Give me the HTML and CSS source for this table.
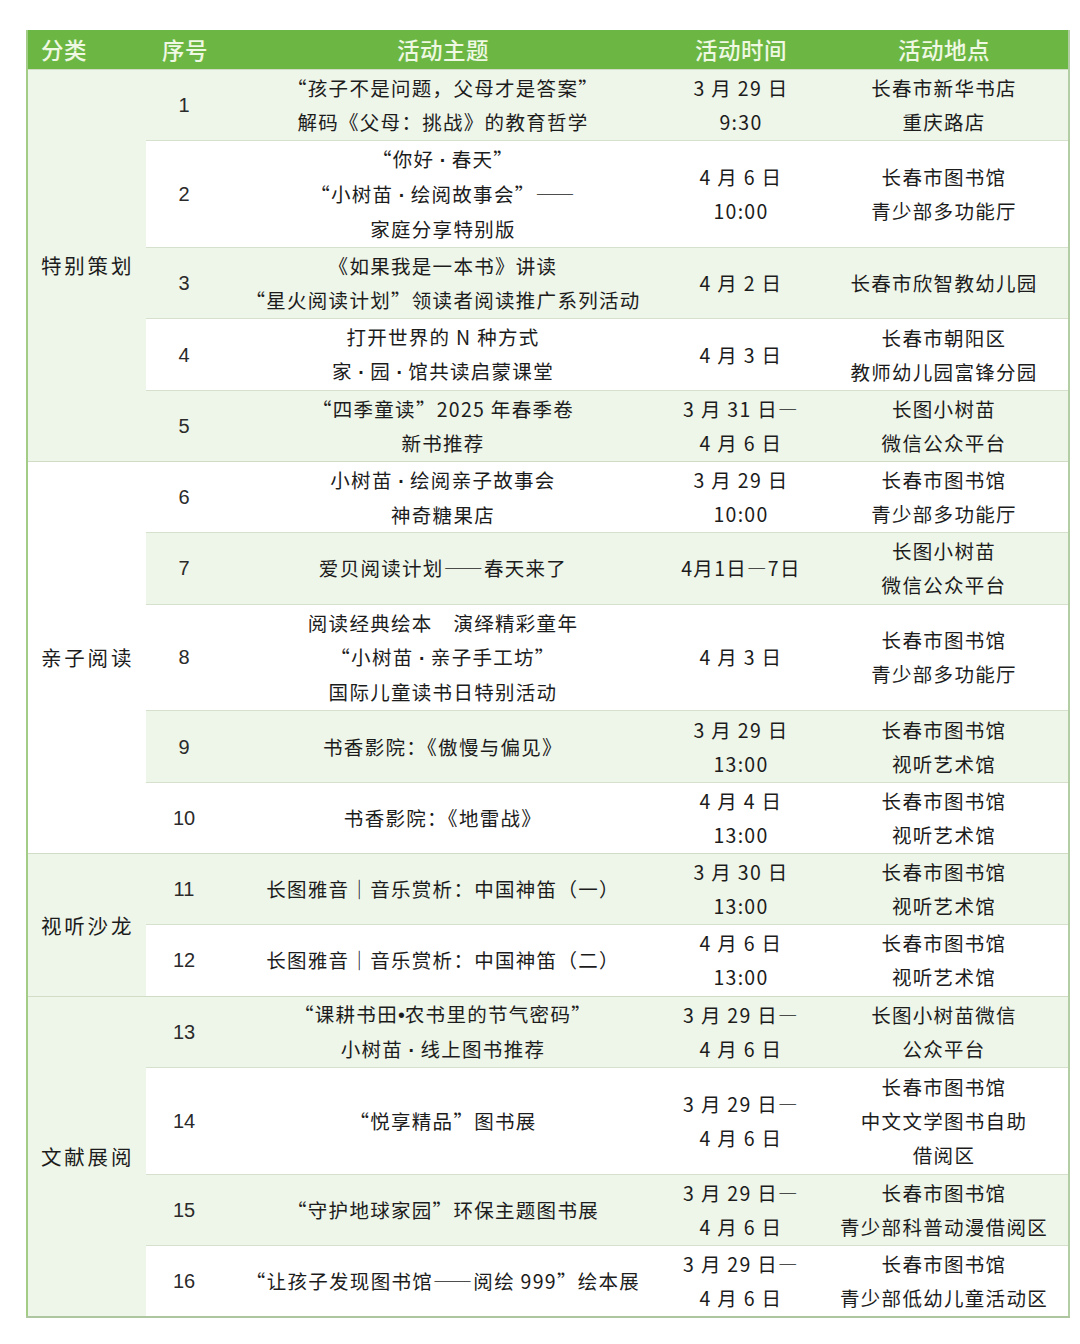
FILE: index.html
```html
<!DOCTYPE html>
<html lang="zh-CN">
<head>
<meta charset="utf-8">
<title>活动安排</title>
<link rel="stylesheet" href="styles.css">
</head>
<body>
<table class="schedule">
  <colgroup>
    <col class="c-cat"><col class="c-no"><col class="c-topic"><col class="c-time"><col class="c-place">
  </colgroup>
  <thead>
    <tr class="head">
      <th class="h-cat">分类</th><th>序号</th><th>活动主题</th><th>活动时间</th><th>活动地点</th>
    </tr>
  </thead>
  <tbody>
    <tr class="tint group-start l2">
      <td class="cat tint" rowspan="5">特别策划</td>
      <td class="no">1</td>
      <td>“孩子不是问题，父母才是答案”<br>解码《父母：挑战》的教育哲学</td>
      <td>3 月 29 日<br>9:30</td>
      <td>长春市新华书店<br>重庆路店</td>
    </tr>
    <tr class="l3">
      <td class="no">2</td>
      <td>“你好<span class="dot"> · </span>春天”<br>“小树苗<span class="dot"> · </span>绘阅故事会”——<br>家庭分享特别版</td>
      <td>4 月 6 日<br>10:00</td>
      <td>长春市图书馆<br>青少部多功能厅</td>
    </tr>
    <tr class="tint l2">
      <td class="no">3</td>
      <td>《如果我是一本书》讲读<br>“星火阅读计划”领读者阅读推广系列活动</td>
      <td>4 月 2 日</td>
      <td>长春市欣智教幼儿园</td>
    </tr>
    <tr class="l2">
      <td class="no">4</td>
      <td>打开世界的 N 种方式<br>家<span class="dot"> · </span>园<span class="dot"> · </span>馆共读启蒙课堂</td>
      <td>4 月 3 日</td>
      <td>长春市朝阳区<br>教师幼儿园富锋分园</td>
    </tr>
    <tr class="tint l2">
      <td class="no">5</td>
      <td>“四季童读”2025 年春季卷<br>新书推荐</td>
      <td>3 月 31 日—<br>4 月 6 日</td>
      <td>长图小树苗<br>微信公众平台</td>
    </tr>

    <tr class="group-start l2">
      <td class="cat" rowspan="5">亲子阅读</td>
      <td class="no">6</td>
      <td>小树苗<span class="dot"> · </span>绘阅亲子故事会<br>神奇糖果店</td>
      <td>3 月 29 日<br>10:00</td>
      <td>长春市图书馆<br>青少部多功能厅</td>
    </tr>
    <tr class="tint l2">
      <td class="no">7</td>
      <td>爱贝阅读计划——春天来了</td>
      <td>4月1日—7日</td>
      <td>长图小树苗<br>微信公众平台</td>
    </tr>
    <tr class="l3">
      <td class="no">8</td>
      <td>阅读经典绘本　演绎精彩童年<br>“小树苗<span class="dot"> · </span>亲子手工坊”<br>国际儿童读书日特别活动</td>
      <td>4 月 3 日</td>
      <td>长春市图书馆<br>青少部多功能厅</td>
    </tr>
    <tr class="tint l2">
      <td class="no">9</td>
      <td>书香影院：《傲慢与偏见》</td>
      <td>3 月 29 日<br>13:00</td>
      <td>长春市图书馆<br>视听艺术馆</td>
    </tr>
    <tr class="l2">
      <td class="no">10</td>
      <td>书香影院：《地雷战》</td>
      <td>4 月 4 日<br>13:00</td>
      <td>长春市图书馆<br>视听艺术馆</td>
    </tr>

    <tr class="tint group-start l2">
      <td class="cat tint" rowspan="2">视听沙龙</td>
      <td class="no">11</td>
      <td>长图雅音｜音乐赏析：中国神笛（一）</td>
      <td>3 月 30 日<br>13:00</td>
      <td>长春市图书馆<br>视听艺术馆</td>
    </tr>
    <tr class="l2">
      <td class="no">12</td>
      <td>长图雅音｜音乐赏析：中国神笛（二）</td>
      <td>4 月 6 日<br>13:00</td>
      <td>长春市图书馆<br>视听艺术馆</td>
    </tr>

    <tr class="tint group-start l2">
      <td class="cat tint" rowspan="4">文献展阅</td>
      <td class="no">13</td>
      <td>“课耕书田<span class="bullet">•</span>农书里的节气密码”<br>小树苗<span class="dot"> · </span>线上图书推荐</td>
      <td>3 月 29 日—<br>4 月 6 日</td>
      <td>长图小树苗微信<br>公众平台</td>
    </tr>
    <tr class="l3">
      <td class="no">14</td>
      <td>“悦享精品”图书展</td>
      <td>3 月 29 日—<br>4 月 6 日</td>
      <td>长春市图书馆<br>中文文学图书自助<br>借阅区</td>
    </tr>
    <tr class="tint l2">
      <td class="no">15</td>
      <td>“守护地球家园”环保主题图书展</td>
      <td>3 月 29 日—<br>4 月 6 日</td>
      <td>长春市图书馆<br>青少部科普动漫借阅区</td>
    </tr>
    <tr class="l2">
      <td class="no">16</td>
      <td>“让孩子发现图书馆——阅绘 999”绘本展</td>
      <td>3 月 29 日—<br>4 月 6 日</td>
      <td>长春市图书馆<br>青少部低幼儿童活动区</td>
    </tr>
  </tbody>
</table>
</body>
</html>
```

FILE: styles.css
```css
html, body {
  margin: 0;
  padding: 0;
  background: #ffffff;
}

body {
  padding: 30px 12px 0 26px;
  font-family: "Noto Sans CJK SC", "Noto Sans", sans-serif;
  color: #1c1c1c;
}

.schedule {
  width: 1042px;
  border-collapse: collapse;
  table-layout: fixed;
  border-left: 2px solid #a3cc86;
  border-right: 2px solid #b3cda4;
  border-bottom: 2px solid #adc6a0;
}

.c-cat { width: 119px; }
.c-no { width: 78px; }
.c-topic { width: 438px; }
.c-time { width: 158px; }
.c-place { width: 249px; }

.head th {
  height: 37px;
  padding: 0 0 2px 0;
  background: #6cb744;
  color: #eef8e2;
  font-size: 22.5px;
  font-weight: 500;
  letter-spacing: 0.5px;
  text-align: center;
  vertical-align: middle;
}

.head .h-cat {
  text-align: left;
  padding-left: 13px;
}

tr.l2 { height: 71.3px; }
tr.l3 { height: 106.8px; }

td {
  padding: 0;
  text-align: center;
  vertical-align: middle;
  font-size: 19.5px;
  line-height: 34px;
  letter-spacing: 1.3px;
  border-top: 1px solid #d6e1cd;
  white-space: nowrap;
}

tr.tint td {
  background: #eef5e9;
}

td.cat {
  background: #ffffff;
  text-align: left;
  padding-left: 13px;
  font-size: 20.5px;
  letter-spacing: 2.8px;
  border-top: 1px solid #d0dcc6;
}

tr.tint td.cat,
td.cat.tint {
  background: #eef5e9;
}

tr.group-start td {
  border-top: 1px solid #d0dcc6;
}

td.no {
  font-family: "Liberation Sans", Arial, sans-serif;
  font-size: 20px;
  letter-spacing: 0;
  color: #2a2a2a;
  padding-right: 2px;
}

.dot {
  font-family: "Liberation Sans", Arial, sans-serif;
  font-weight: 700;
  letter-spacing: 0;
  white-space: pre;
}

.bullet {
  font-family: "Liberation Sans", Arial, sans-serif;
  letter-spacing: 0;
}
```
